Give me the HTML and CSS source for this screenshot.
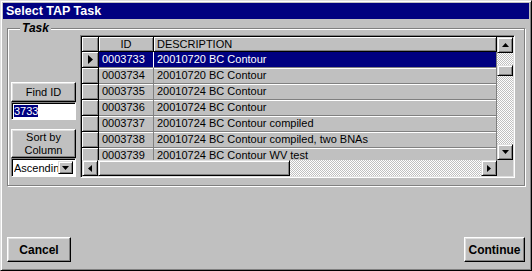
FILE: index.html
```html
<!DOCTYPE html>
<html lang="en">

<head>
    <meta charset="UTF-8">
    <title>Select TAP Task</title>
    <link rel="stylesheet" href="styles.css">
</head>

<body>
    <div class="window">
        <div class="title-bar">Select TAP Task</div>
        <fieldset class="group">
            <legend>Task</legend>
            <div class="group-body">
                <div class="side">
                    <button class="btn find-btn">Find ID</button>
                    <div class="text-input"><span class="sel">3733</span></div>
                    <button class="btn sort-btn">Sort by<br>Column</button>
                    <div class="combo">
                        <span class="combo-text">Ascending</span>
                        <span class="combo-btn">
                            <svg width="7" height="4" viewBox="0 0 7 4"><path d="M0 0h7L3.5 4z" fill="#000"/></svg>
                        </span>
                    </div>
                </div>
                <div class="grid">
                    <div class="grid-rows">
                        <div class="row head">
                            <div class="sel-cell"></div>
                            <div class="cell id">ID</div>
                            <div class="cell desc">DESCRIPTION</div>
                        </div>
                        <div class="row current">
                            <div class="sel-cell">
                                <svg width="5" height="9" viewBox="0 0 5 9"><path d="M0 0v9l5-4.5z" fill="#000"/></svg>
                            </div>
                            <div class="cell id">0003733</div>
                            <div class="cell desc">20010720 BC Contour</div>
                        </div>
                        <div class="row">
                            <div class="sel-cell"></div>
                            <div class="cell id">0003734</div>
                            <div class="cell desc">20010720 BC Contour</div>
                        </div>
                        <div class="row">
                            <div class="sel-cell"></div>
                            <div class="cell id">0003735</div>
                            <div class="cell desc">20010724 BC Contour</div>
                        </div>
                        <div class="row">
                            <div class="sel-cell"></div>
                            <div class="cell id">0003736</div>
                            <div class="cell desc">20010724 BC Contour</div>
                        </div>
                        <div class="row">
                            <div class="sel-cell"></div>
                            <div class="cell id">0003737</div>
                            <div class="cell desc">20010724 BC Contour compiled</div>
                        </div>
                        <div class="row">
                            <div class="sel-cell"></div>
                            <div class="cell id">0003738</div>
                            <div class="cell desc">20010724 BC Contour compiled, two BNAs</div>
                        </div>
                        <div class="row">
                            <div class="sel-cell"></div>
                            <div class="cell id">0003739</div>
                            <div class="cell desc">20010724 BC Contour WV test</div>
                        </div>
                    </div>
                    <div class="vscroll">
                        <div class="sb-btn">
                            <svg width="7" height="4" viewBox="0 0 7 4"><path d="M0 4h7L3.5 0z" fill="#000"/></svg>
                        </div>
                        <div class="track">
                            <div class="vthumb"></div>
                        </div>
                        <div class="sb-btn">
                            <svg width="7" height="4" viewBox="0 0 7 4"><path d="M0 0h7L3.5 4z" fill="#000"/></svg>
                        </div>
                    </div>
                    <div class="hscroll">
                        <div class="sb-btn">
                            <svg width="4" height="7" viewBox="0 0 4 7"><path d="M4 0v7L0 3.5z" fill="#000"/></svg>
                        </div>
                        <div class="hthumb"></div>
                        <div class="track"></div>
                        <div class="sb-btn">
                            <svg width="4" height="7" viewBox="0 0 4 7"><path d="M0 0v7l4-3.5z" fill="#000"/></svg>
                        </div>
                    </div>
                    <div class="corner"></div>
                </div>
            </div>
        </fieldset>
        <div class="footer">
            <button class="btn action-btn">Cancel</button>
            <button class="btn action-btn">Continue</button>
        </div>
    </div>
</body>

</html>
```

FILE: styles.css
```css
body {
    margin: 0;
    padding: 0;
    background: #c0c0c0;
    font-family: "Liberation Sans", Arial, sans-serif;
    font-size: 11px;
    color: #000;
}

.window {
    box-sizing: border-box;
    width: 532px;
    height: 271px;
    background: #c0c0c0;
    border: 1px solid;
    border-color: #dfdfdf #000 #000 #dfdfdf;
    box-shadow: inset 1px 1px #fff, inset -1px -1px #808080;
    padding: 2px;
    display: flex;
    flex-direction: column;
}

.title-bar {
    height: 16px;
    line-height: 16px;
    background: #000080;
    color: #fff;
    font-weight: bold;
    font-size: 12.5px;
    padding-left: 3px;
}

.group {
    margin: 3px 4px 0 4px;
    padding: 1px 9px 7px 3px;
    border: 1px solid #808080;
    box-shadow: 1px 1px 0 #fff, inset 1px 1px 0 #fff;
    min-width: 0;
}

.group legend {
    padding: 0 2px;
    margin-left: 9px;
    font-size: 12px;
    line-height: 12px;
    font-weight: bold;
    font-style: italic;
    background: #c0c0c0;
}

.group-body {
    display: flex;
    gap: 4px;
}

.side {
    width: 65px;
    display: flex;
    flex-direction: column;
    padding-top: 47px;
}

.btn {
    box-sizing: border-box;
    background: #c0c0c0;
    border: 1px solid;
    border-color: #fff #000 #000 #fff;
    box-shadow: inset -1px -1px #808080, inset 1px 1px #dfdfdf;
    font-family: "Liberation Sans", Arial, sans-serif;
    font-size: 11px;
    color: #000;
    padding: 0;
    margin: 0;
}

.find-btn {
    height: 20px;
}

.sort-btn {
    height: 29px;
    line-height: 13px;
    margin-top: 9px;
}

.text-input {
    box-sizing: border-box;
    height: 18px;
    background: #fff;
    border: 1px solid;
    border-color: #808080 #fff #fff #808080;
    box-shadow: inset 1px 1px #000;
    padding: 2px 0 0 2px;
    line-height: 13px;
}

.sel {
    background: #000080;
    color: #fff;
}

.combo {
    box-sizing: border-box;
    height: 19px;
    background: #fff;
    border: 1px solid;
    border-color: #808080 #fff #fff #808080;
    box-shadow: inset 1px 1px #000;
    display: flex;
    padding: 2px;
}

.combo-text {
    flex: 1;
    overflow: hidden;
    white-space: nowrap;
    line-height: 14px;
}

.combo-btn {
    width: 15px;
    box-sizing: border-box;
    background: #c0c0c0;
    border: 1px solid;
    border-color: #dfdfdf #000 #000 #dfdfdf;
    box-shadow: inset 1px 1px #fff, inset -1px -1px #808080;
    display: flex;
    align-items: center;
    justify-content: center;
}

.grid {
    box-sizing: border-box;
    width: 435px;
    height: 143px;
    border: 1px solid;
    border-color: #808080 #fff #fff #808080;
    box-shadow: inset 1px 1px #000, inset -1px -1px #dfdfdf;
    padding: 1px;
    display: grid;
    grid-template-columns: 1fr 16px;
    grid-template-rows: 1fr 16px;
}

.grid-rows {
    overflow: hidden;
    background: #c0c0c0;
}

.row {
    display: grid;
    grid-template-columns: 17px 55px 1fr;
    height: 16px;
    line-height: 15px;
}

.row.head {
    height: 15px;
    line-height: 14px;
}

.sel-cell {
    box-sizing: border-box;
    border-right: 1px solid #000;
    border-bottom: 1px solid #000;
    box-shadow: inset 1px 1px #fff, inset -1px -1px #808080;
    display: flex;
    align-items: center;
    justify-content: center;
}

.cell {
    box-sizing: border-box;
    border-right: 1px solid #808080;
    border-bottom: 1px solid #808080;
    box-shadow: inset 0 1px #fff;
    padding-left: 3px;
    white-space: nowrap;
    overflow: hidden;
}

.head .cell {
    border-color: #000;
    box-shadow: inset 1px 1px #fff, inset -1px -1px #808080;
}

.head .id {
    text-align: center;
    padding-left: 0;
}

.current .cell {
    background: #000080;
    color: #fff;
    box-shadow: none;
}

.current .id {
    border-right-color: #fff;
}

.vscroll {
    display: flex;
    flex-direction: column;
}

.hscroll {
    display: flex;
}

.sb-btn {
    box-sizing: border-box;
    width: 16px;
    height: 16px;
    flex: none;
    background: #c0c0c0;
    border: 1px solid;
    border-color: #dfdfdf #000 #000 #dfdfdf;
    box-shadow: inset 1px 1px #fff, inset -1px -1px #808080;
    display: flex;
    align-items: center;
    justify-content: center;
}

.track {
    flex: 1;
    background: repeating-conic-gradient(#fff 0 25%, #c0c0c0 0 50%) 0 0 / 2px 2px;
}

.vscroll .track {
    padding-top: 12px;
}

.vthumb,
.hthumb {
    box-sizing: border-box;
    background: #c0c0c0;
    border: 1px solid;
    border-color: #dfdfdf #000 #000 #dfdfdf;
    box-shadow: inset 1px 1px #fff, inset -1px -1px #808080;
}

.vthumb {
    height: 11px;
}

.hthumb {
    width: 192px;
}

.corner {
    background: #c0c0c0;
}

.footer {
    margin-top: auto;
    display: flex;
    justify-content: space-between;
    padding: 0 4px 6px 4px;
}

.action-btn {
    height: 25px;
    font-weight: bold;
    font-size: 12px;
}

.action-btn:first-child {
    width: 64px;
}

.action-btn:last-child {
    width: 61px;
}
```
